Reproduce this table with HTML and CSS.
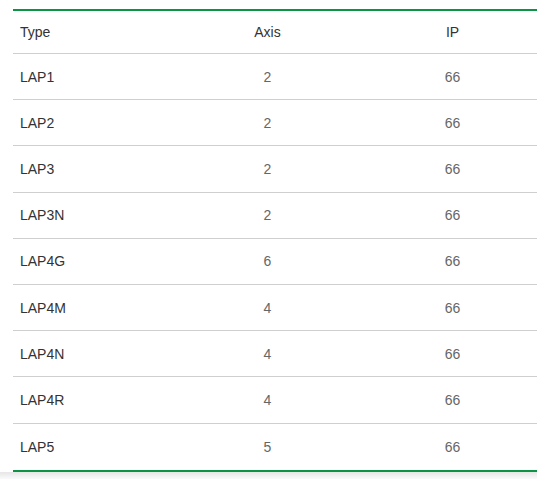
FILE: index.html
```html
<!DOCTYPE html>
<html>
<head>
<meta charset="utf-8">
<link rel="stylesheet" href="styles.css">
</head>
<body>
<div class="wrap">
  <table class="spec">
    <colgroup><col class="c1"><col class="c2"><col class="c3"></colgroup>
    <thead>
      <tr><th class="left">Type</th><th>Axis</th><th>IP</th></tr>
    </thead>
    <tbody>
      <tr><td class="left">LAP1</td><td>2</td><td>66</td></tr>
      <tr><td class="left">LAP2</td><td>2</td><td>66</td></tr>
      <tr><td class="left">LAP3</td><td>2</td><td>66</td></tr>
      <tr><td class="left">LAP3N</td><td>2</td><td>66</td></tr>
      <tr><td class="left">LAP4G</td><td>6</td><td>66</td></tr>
      <tr><td class="left">LAP4M</td><td>4</td><td>66</td></tr>
      <tr><td class="left">LAP4N</td><td>4</td><td>66</td></tr>
      <tr><td class="left">LAP4R</td><td>4</td><td>66</td></tr>
      <tr><td class="left">LAP5</td><td>5</td><td>66</td></tr>
    </tbody>
  </table>
</div>
<div class="shade"></div>
</body>
</html>
```
FILE: styles.css
```css
html, body {
  margin: 0;
  padding: 0;
  background: #fff;
  overflow: hidden;
}
body {
  font-family: "Liberation Sans", Arial, sans-serif;
  font-size: 14px;
  color: #333;
}
.wrap {
  padding: 9px 0 0 13px;
  overflow: hidden;
}
.spec {
  border-collapse: collapse;
  table-layout: fixed;
  width: 532px;
  border-top: 2px solid #0b9444;
  border-bottom: 2px solid #0b9444;
}
.c1 { width: 162px; }
.c2 { width: 185px; }
.c3 { width: 185px; }
.spec th, .spec td {
  padding: 0 7px;
  text-align: center;
  font-weight: normal;
  line-height: 20px;
}
.spec th {
  height: 42px;
  color: #333;
  border-bottom: 1px solid #cfcfcf;
}
.spec td {
  height: 45.2px;
  color: #666;
  border-bottom: 1px solid #cfcfcf;
}
.spec tbody tr:last-child td {
  border-bottom: none;
  height: 46.2px;
}
.spec .left {
  text-align: left;
  color: #333;
}
.shade {
  height: 7px;
  background: linear-gradient(#e6e6e6, #fafafa);
}
```
